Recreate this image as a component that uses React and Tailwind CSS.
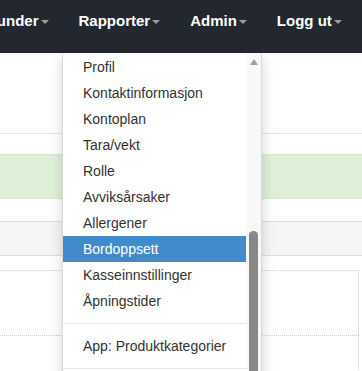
import React from 'react';

const navItems = ['Kunder', 'Rapporter', 'Admin', 'Logg ut'];

const menuGroups = [
  ['Profil', 'Kontaktinformasjon', 'Kontoplan', 'Tara/vekt', 'Rolle', 'Avviksårsaker', 'Allergener', 'Bordoppsett', 'Kasseinnstillinger', 'Åpningstider'],
  ['App: Produktkategorier'],
];

const Caret = () => (
  <span className="ml-[2px] inline-block h-0 w-0 border-x-4 border-t-4 border-x-transparent border-t-[#9d9d9d] align-middle" />
);

const App = () => {
  return (
    <div className="relative h-[371px] w-[362px] overflow-hidden bg-white font-['Liberation_Sans',Arial,sans-serif]">
      {/* Navbar */}
      <nav className="h-[53px] bg-[#23272f]">
        <ul className="ml-[-29px] flex whitespace-nowrap">
          {navItems.map((item) => (
            <li key={item} className="px-[15px] pt-[11px] text-[15px] leading-[20px] font-bold text-white">
              {item}
              <Caret />
            </li>
          ))}
        </ul>
      </nav>

      {/* Page content behind the menu */}
      <div className="flex flex-col">
        <div className="h-[81px] border-b border-[#e5e5e5]" />
        <div className="mt-[20px] h-[45px] border-y border-[#d6e9c6] bg-[#dff0d8]" />
        <div className="mt-[22px] h-[35px] border-y border-[#dddddd] bg-[#f5f5f5]" />
        <div className="ml-[-10px] mr-[3px] mt-[14px] h-[65px] border-t border-r border-dotted border-[#c8c8c8]" />
        <div className="ml-[-10px] mr-[3px] h-[65px] border-t border-r border-dotted border-[#c8c8c8]" />
      </div>

      {/* Dropdown menu */}
      <div className="absolute left-[62px] top-[53px] flex h-[330px] w-[200px] border border-t-0 border-[rgba(0,0,0,0.15)] bg-white shadow-[0_6px_12px_rgba(0,0,0,0.175)]">
        <ul className="flex-1 pt-[0.5px]">
          {menuGroups.map((group, gi) => (
            <React.Fragment key={gi}>
              {gi > 0 && <li className="my-[9px] h-px bg-[#e5e5e5]" />}
              {group.map((label) => (
                <li
                  key={label}
                  className={`px-[20px] text-[14px] leading-[26px] whitespace-nowrap ${
                    label === 'Bordoppsett' ? 'bg-[#428bca] text-white' : 'text-[#333333]'
                  }`}
                >
                  {label}
                </li>
              ))}
            </React.Fragment>
          ))}
          <li className="my-[9px] h-px bg-[#e5e5e5]" />
        </ul>
        <div className="flex w-[15px] flex-col items-center bg-[#f8f8f8]">
          <span className="mt-[6px] h-0 w-0 border-x-[4.5px] border-b-[6px] border-x-transparent border-b-[#a0a0a0]" />
          <div className="mt-[166px] h-[200px] w-[9px] rounded-t-full bg-[#888888]" />
        </div>
      </div>
    </div>
  );
};

export default App;
